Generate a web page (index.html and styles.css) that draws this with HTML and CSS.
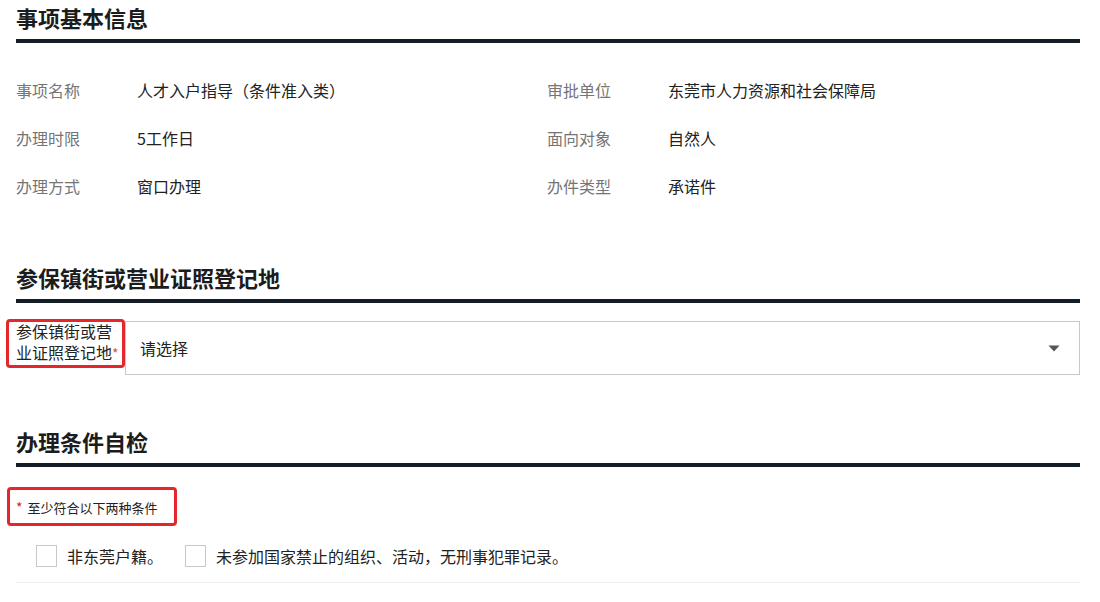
FILE: index.html
```html
<!DOCTYPE html>
<html lang="zh-CN">
<head>
<meta charset="utf-8">
<title>事项基本信息</title>
<link rel="stylesheet" href="styles.css">
</head>
<body>
<div class="page">
  <section class="sec">
    <h2 class="sec-title">事项基本信息</h2>
    <div class="info-grid">
      <div class="info-item"><span class="info-label">事项名称</span><span class="info-value">人才入户指导（条件准入类）</span></div>
      <div class="info-item"><span class="info-label">审批单位</span><span class="info-value">东莞市人力资源和社会保障局</span></div>
      <div class="info-item"><span class="info-label">办理时限</span><span class="info-value">5工作日</span></div>
      <div class="info-item"><span class="info-label">面向对象</span><span class="info-value">自然人</span></div>
      <div class="info-item"><span class="info-label">办理方式</span><span class="info-value">窗口办理</span></div>
      <div class="info-item"><span class="info-label">办件类型</span><span class="info-value">承诺件</span></div>
    </div>
  </section>

  <section class="sec sec-place">
    <h2 class="sec-title">参保镇街或营业证照登记地</h2>
    <div class="form-row">
      <div class="form-label">参保镇街或营业证照登记地<span class="req-sm">*</span></div>
      <div class="select">
        <span class="select-text">请选择</span>
        <svg class="select-arrow" width="12" height="7" viewBox="0 0 12 7"><path d="M0.5 0.5 L11.5 0.5 L6 6.5 Z" fill="#555"/></svg>
      </div>
    </div>
  </section>

  <section class="sec sec-check">
    <h2 class="sec-title">办理条件自检</h2>
    <div class="note"><span class="req">*</span>至少符合以下两种条件</div>
    <div class="checks">
      <label class="check"><span class="box"></span><span class="check-text">非东莞户籍。</span></label>
      <label class="check"><span class="box"></span><span class="check-text">未参加国家禁止的组织、活动，无刑事犯罪记录。</span></label>
    </div>
  </section>
</div>
</body>
</html>
```

FILE: styles.css
```css
html, body {
  margin: 0;
  padding: 0;
  background: #ffffff;
}
body {
  font-family: "Noto Sans CJK SC", "Noto Sans", sans-serif;
  color: #333333;
}
.page {
  padding: 0 20px 0 16px;
}
.sec-title {
  margin: 0;
  font-size: 22px;
  font-weight: 700;
  line-height: 34px;
  color: #1c1c1c;
  padding-bottom: 5px;
  border-bottom: 4px solid #141c26;
}
.info-grid {
  margin-top: 23px;
  display: grid;
  grid-template-columns: 531px 1fr;
}
.info-item {
  display: flex;
  line-height: 48px;
  font-size: 16px;
}
.info-label {
  width: 121px;
  flex: none;
  color: #757575;
}
.info-value {
  color: #222222;
}
.sec-place {
  margin-top: 50px;
}
.form-row {
  margin-top: 18px;
  display: flex;
  align-items: flex-start;
}
.form-label {
  position: relative;
  width: 109px;
  flex: none;
  font-size: 16px;
  line-height: 21px;
  color: #222222;
}
.form-label::after {
  content: "";
  position: absolute;
  left: -10px;
  top: -2px;
  width: 119px;
  height: 49px;
  border: 3px solid #e5262a;
  border-radius: 4px;
  box-sizing: border-box;
}
.req-sm {
  color: #d9534f;
  font-size: 14px;
}
.select {
  flex: 1;
  height: 54px;
  box-sizing: border-box;
  border: 1px solid #c8c8c8;
  display: flex;
  align-items: center;
  justify-content: space-between;
  padding: 0 19px 0 14px;
  font-size: 16px;
  color: #222222;
}
.select-arrow {
  display: block;
}
.sec-check {
  margin-top: 49px;
}
.note {
  position: relative;
  display: inline-block;
  margin-top: 26px;
  font-size: 13px;
  line-height: 28px;
  color: #222222;
}
.note::after {
  content: "";
  position: absolute;
  left: -9px;
  top: -6px;
  width: 170px;
  height: 39px;
  border: 3px solid #e5262a;
  border-radius: 4px;
  box-sizing: border-box;
}
.req {
  color: #e02020;
  margin-right: 5px;
  font-size: 14px;
}
.checks {
  margin-top: 23px;
  padding: 0 0 15px 20px;
  border-bottom: 1px solid #eeeeee;
  display: flex;
  align-items: center;
}
.check {
  display: inline-flex;
  align-items: center;
  gap: 10px;
  margin-right: 22px;
  font-size: 16px;
  line-height: 22px;
  color: #222222;
}
.box {
  width: 21px;
  height: 22px;
  box-sizing: border-box;
  border: 1px solid #c8c8c8;
  background: #fff;
  flex: none;
}
```
